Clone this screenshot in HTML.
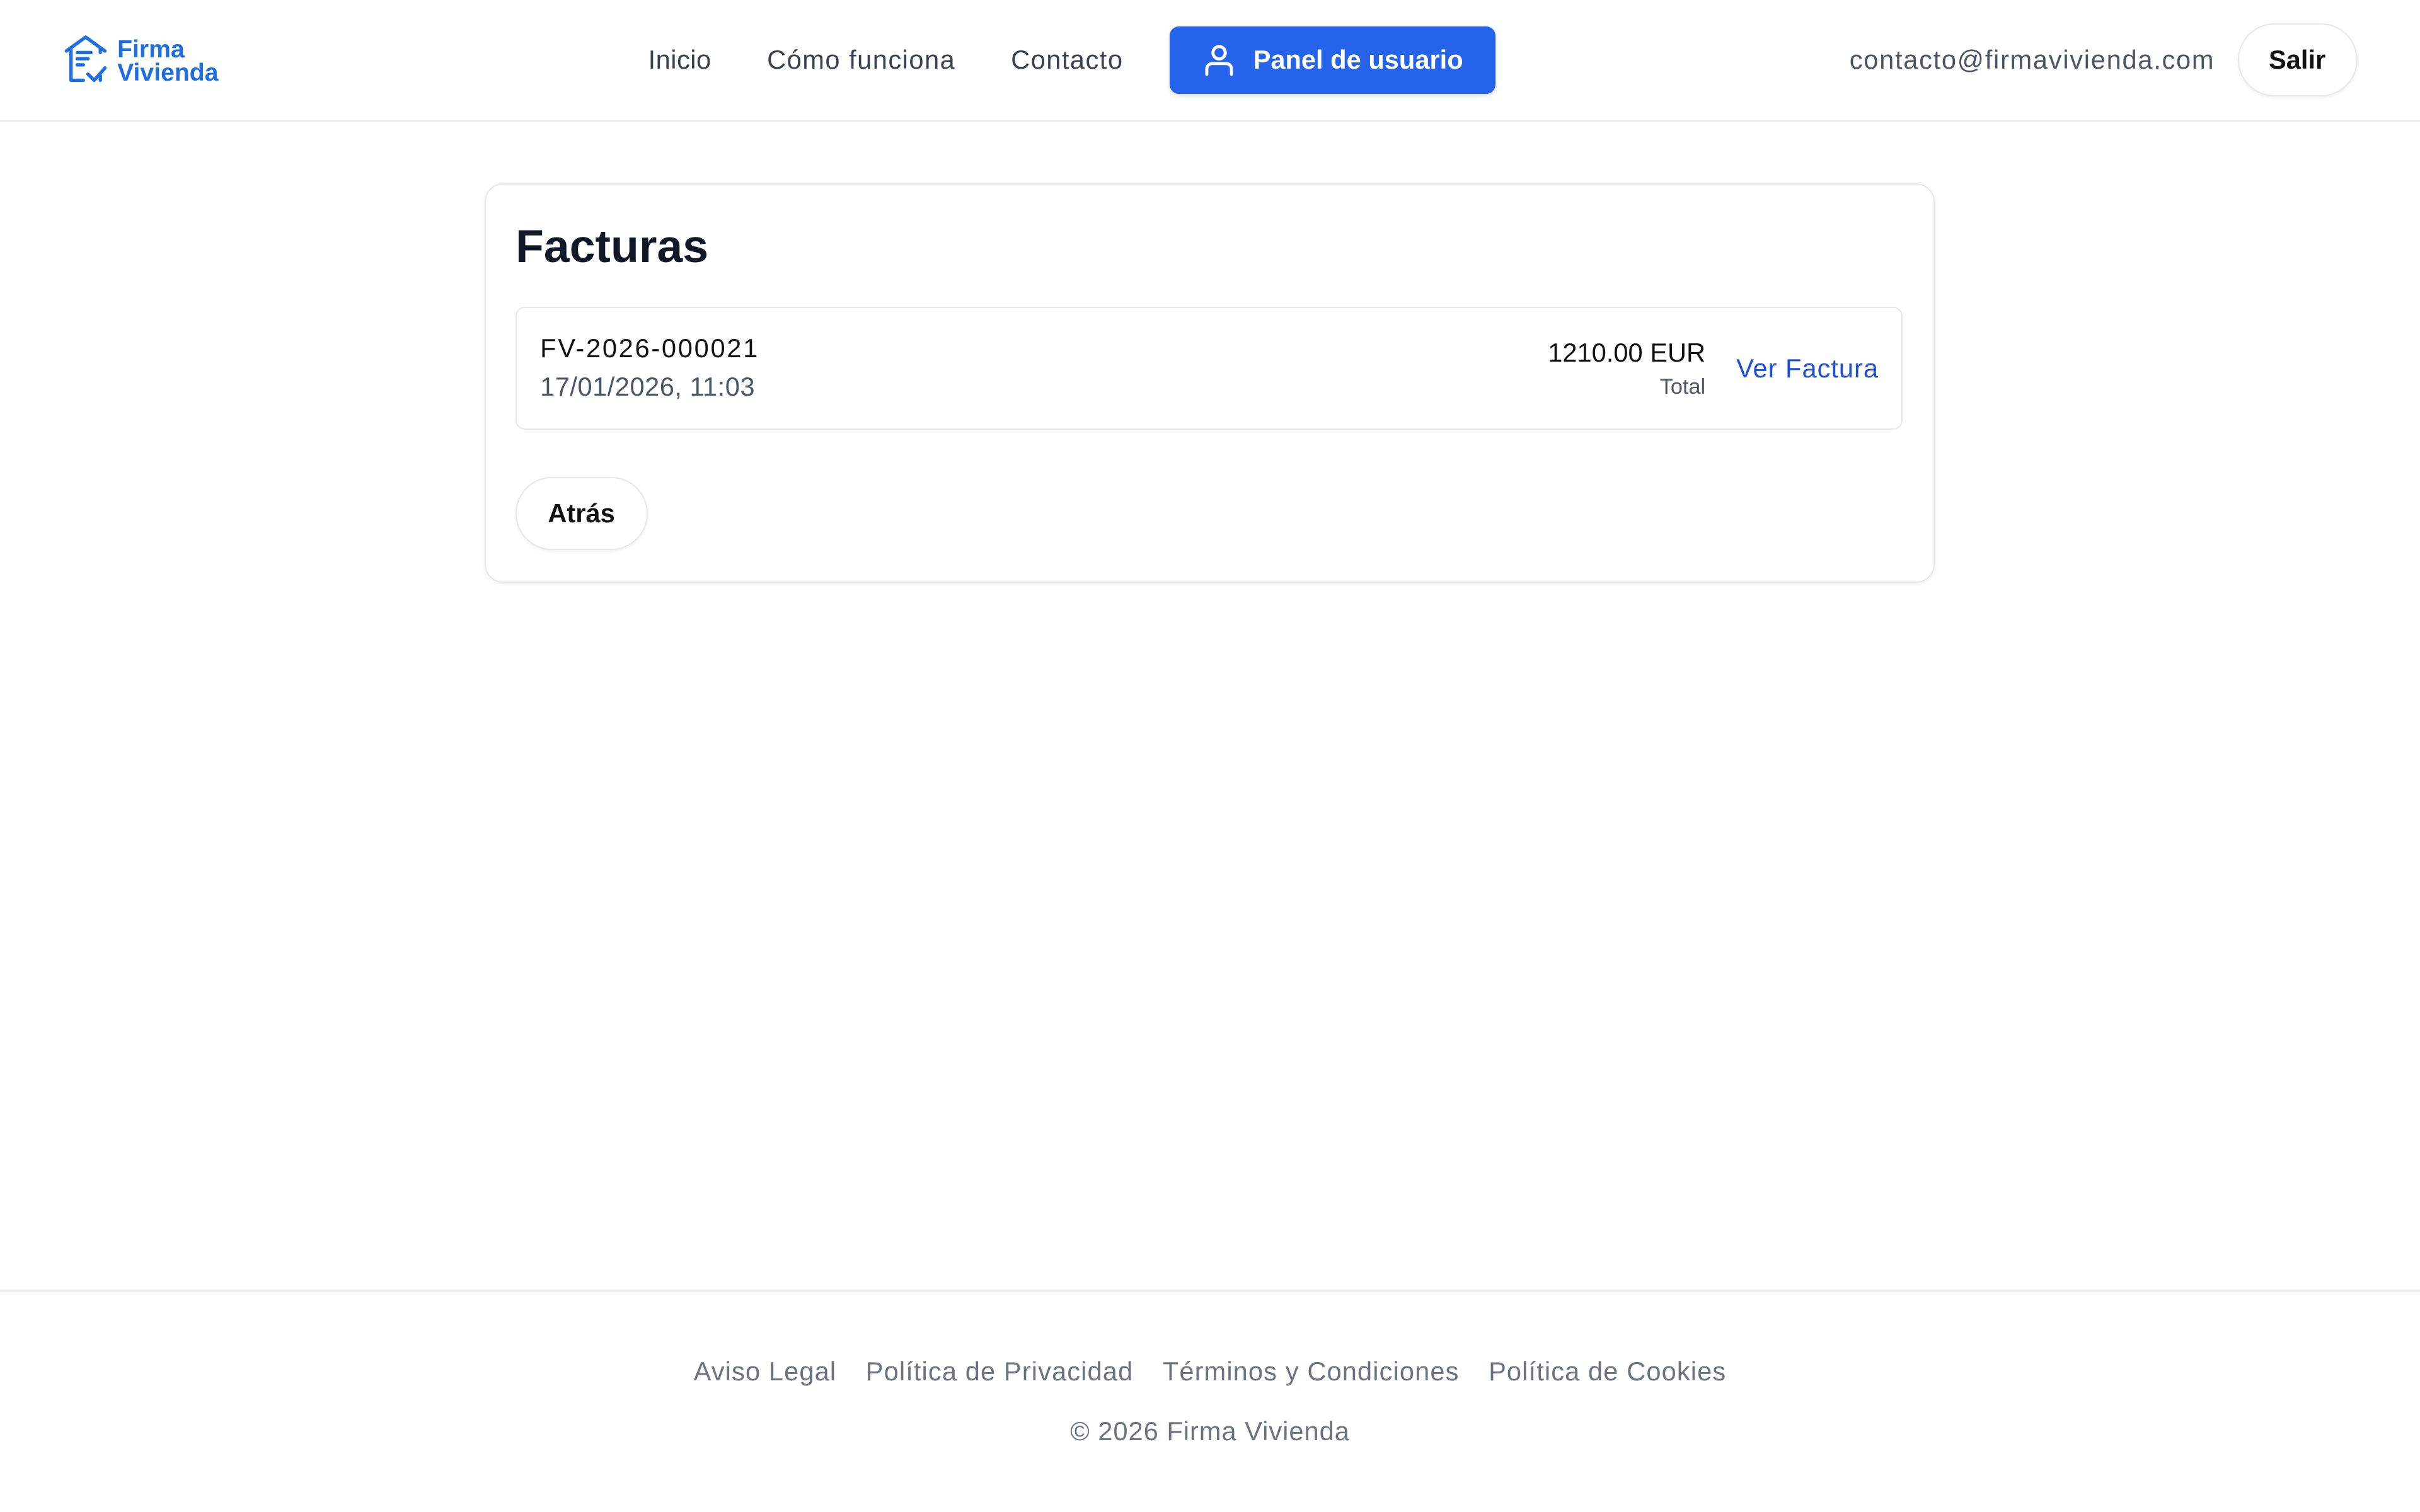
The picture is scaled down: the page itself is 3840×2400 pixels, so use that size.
<!DOCTYPE html>
<html><head><meta charset="utf-8">
<style>
html,body{margin:0;padding:0;background:#fff;}
#w{zoom:2.44898;width:1568px;height:980px;position:relative;overflow:hidden;font-family:"Liberation Sans",sans-serif;color:#111827;}
.a{position:absolute;white-space:nowrap;}
</style></head><body><div id="w">
<!-- header -->
<div class="a" style="left:0;top:78px;width:1568px;height:1px;background:#e5e7eb"></div>
<svg class="a" style="left:40px;top:22px" width="32" height="32" viewBox="0 0 32 32" fill="none" stroke="#1f6fe0" stroke-width="2.2" stroke-linecap="round" stroke-linejoin="round">
<path d="M3 11 L15.5 2 L28 11"/><path d="M6 10 V30 H14"/><path d="M25 9 V12"/>
<path d="M10 12 H19 M10 16 H17 M10 20 H14"/><path d="M17 26 L21 30 L28 22"/><path d="M25 27 V30"/>
</svg>
<div class="a" style="left:76px;top:25px;font-size:16px;font-weight:700;color:#1f6fe0;line-height:15px">Firma<br>Vivienda</div>
<div class="a" style="left:420px;top:29px;font-size:17px;color:#374151;letter-spacing:0.2px">Inicio</div>
<div class="a" style="left:497px;top:29px;font-size:17px;color:#374151;letter-spacing:0.6px">Cómo funciona</div>
<div class="a" style="left:655px;top:29px;font-size:17px;color:#374151;letter-spacing:0.6px">Contacto</div>
<div class="a" style="left:758px;top:17px;width:211px;height:44px;background:#2563eb;border-radius:6px;box-shadow:0 1px 3px rgba(0,0,0,.15)"></div>
<svg class="a" style="left:780px;top:28px" width="20" height="22" viewBox="0 0 20 22" fill="none" stroke="#fff" stroke-width="2" stroke-linecap="round"><circle cx="10" cy="6" r="4"/><path d="M2 20 V17 Q2 13 6 13 H14 Q18 13 18 17 V20"/></svg>
<div class="a" style="left:812px;top:29px;font-size:17px;font-weight:700;color:#fff">Panel de usuario</div>
<div class="a" style="right:133px;top:29px;font-size:17px;color:#4b5563;letter-spacing:0.7px">contacto@firmavivienda.com</div>
<div class="a" style="left:1450px;top:15px;width:76px;height:46px;border:1px solid #e5e7eb;border-radius:24px;box-shadow:0 1px 2px rgba(0,0,0,.06)"></div>
<div class="a" style="left:1470px;top:29px;font-size:17px;font-weight:700;color:#111">Salir</div>
<!-- card -->
<div class="a" style="left:314px;top:119px;width:938px;height:257px;border:1px solid #e5e7eb;border-radius:12px;box-shadow:0 1px 3px rgba(0,0,0,.06)"></div>
<div class="a" style="left:334px;top:142px;font-size:30px;font-weight:700;color:#111827">Facturas</div>
<div class="a" style="left:334px;top:199px;width:897px;height:78px;border:1px solid #e2e8f0;border-radius:6px"></div>
<div class="a" style="left:350px;top:216px;font-size:17px;color:#111;letter-spacing:1.1px">FV-2026-000021</div>
<div class="a" style="left:350px;top:241px;font-size:17px;color:#4b5563;letter-spacing:0.2px">17/01/2026, 11:03</div>
<div class="a" style="right:463px;top:219px;font-size:17px;color:#111">1210.00 EUR</div>
<div class="a" style="right:463px;top:243px;font-size:14px;color:#4b5563">Total</div>
<div class="a" style="left:1125px;top:229px;font-size:17px;color:#1d4ed8;letter-spacing:0.4px">Ver Factura</div>
<div class="a" style="left:334px;top:309px;width:84px;height:46px;border:1px solid #e5e7eb;border-radius:24px;box-shadow:0 1px 2px rgba(0,0,0,.06)"></div>
<div class="a" style="left:355px;top:323px;font-size:17px;font-weight:700;color:#111">Atrás</div>
<!-- footer -->
<div class="a" style="left:0;top:836px;width:1568px;height:1px;background:#e5e7eb"></div>
<div class="a" style="left:0;width:1568px;top:879px;text-align:center;font-size:17px;color:#6b7280;letter-spacing:0.45px">Aviso Legal<span style="display:inline-block;width:19px"></span>Política de Privacidad<span style="display:inline-block;width:19px"></span>Términos y Condiciones<span style="display:inline-block;width:19px"></span>Política de Cookies</div>
<div class="a" style="left:0;width:1568px;top:918px;text-align:center;font-size:17px;color:#6b7280;letter-spacing:0.4px">© 2026 Firma Vivienda</div>
</div></body></html>
